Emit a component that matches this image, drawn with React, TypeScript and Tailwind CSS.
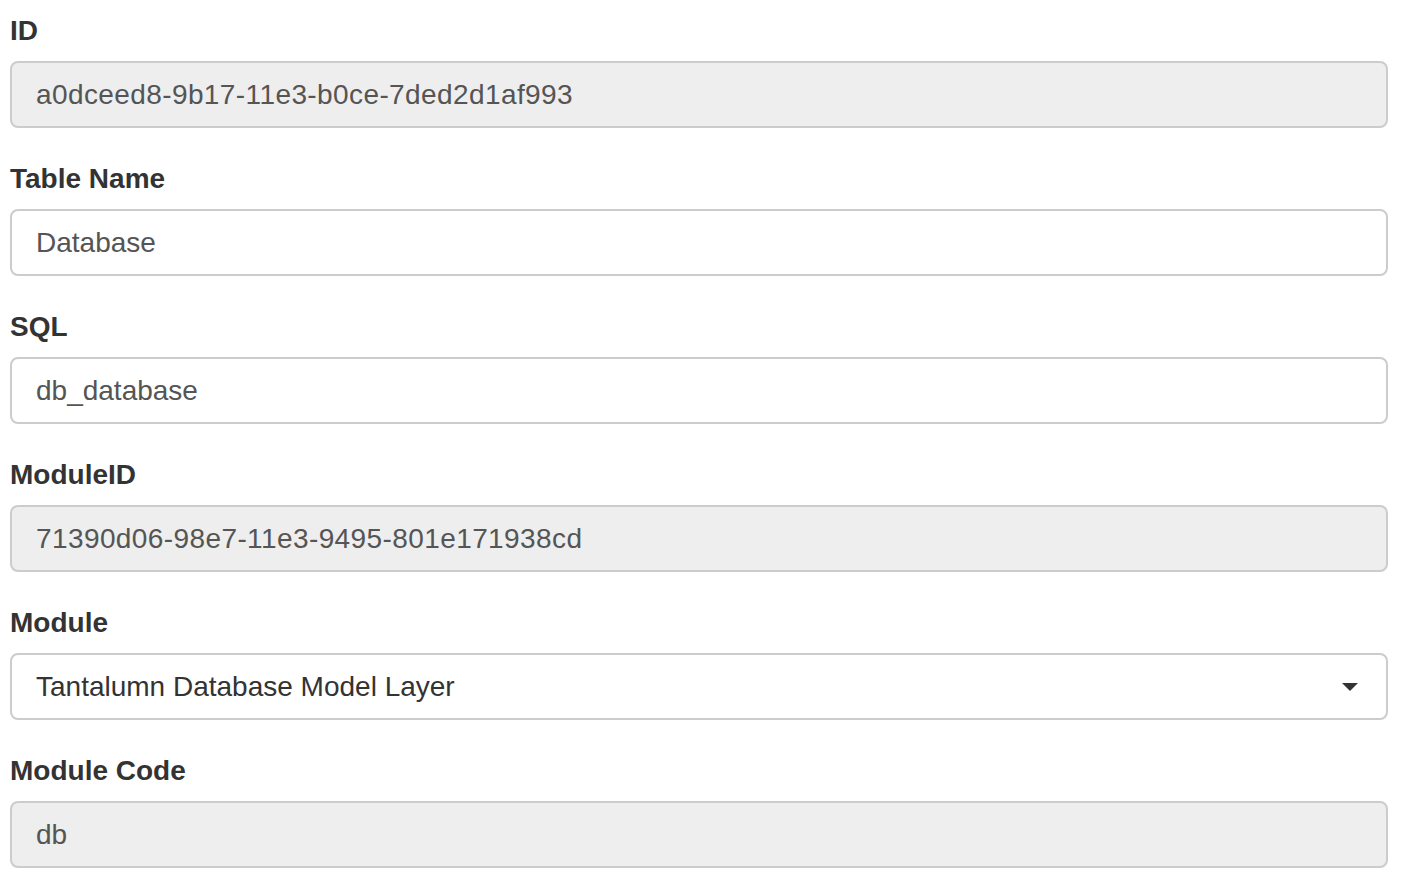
const fields = [
  { label: "ID", value: "a0dceed8-9b17-11e3-b0ce-7ded2d1af993", readOnly: true, mono: true },
  { label: "Table Name", value: "Database", readOnly: false },
  { label: "SQL", value: "db_database", readOnly: false },
  { label: "ModuleID", value: "71390d06-98e7-11e3-9495-801e171938cd", readOnly: true, mono: true },
  { label: "Module", value: "Tantalumn Database Model Layer", select: true },
  { label: "Module Code", value: "db", readOnly: true },
];

const App = () => {
  return (
    <div className="min-h-screen bg-white pl-[10px] pr-[16px] pt-[11px] font-['Liberation_Sans',Arial,sans-serif]">
      {fields.map((field) => (
        <div key={field.label} className="mb-[31px]">
          <label className="mb-[10px] block text-[28px] font-bold leading-[40px] text-[#333]">
            {field.label}
          </label>
          {field.select ? (
            <div className="flex h-[67px] items-center justify-between rounded-[8px] border-2 border-[#ccc] bg-white pl-[24px] pr-[28px] text-[28px] text-[#333]">
              <span>{field.value}</span>
              <svg width="16" height="8" viewBox="0 0 16 8">
                <path d="M0 0H16L8 8Z" fill="#333" />
              </svg>
            </div>
          ) : (
            <div
              className={
                field.readOnly
                  ? "flex h-[67px] items-center rounded-[8px] border-2 border-[#ccc] bg-[#eee] px-[24px] text-[28px] text-[#555]"
                  : "flex h-[67px] items-center rounded-[8px] border-2 border-[#ccc] bg-white px-[24px] text-[28px] text-[#555]"
              }
            >
              <span className={field.mono ? "tracking-[0.4px]" : ""}>{field.value}</span>
            </div>
          )}
        </div>
      ))}
    </div>
  );
};

export default App;
